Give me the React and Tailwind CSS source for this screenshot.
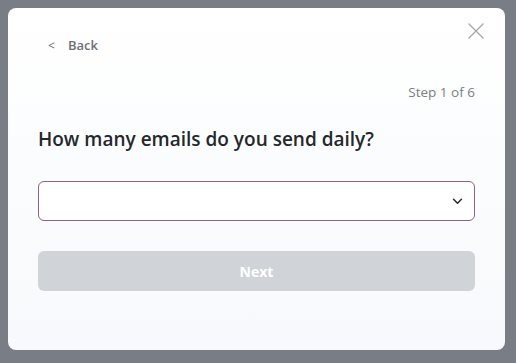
import React from "react";

export default function App() {
  return (
    <div className="w-[516px] h-[363px] bg-[#787d86] p-2" style={{ fontFamily: "'Open Sans', 'Noto Sans', sans-serif" }}>
      <div className="relative w-[497px] h-[342px] rounded-lg bg-gradient-to-b from-white to-[#f7f9fc] pl-[30px] pr-[30px] pt-[29px]">
        <button className="absolute right-[21px] top-[15px] w-[16px] h-[16px] text-[#a3a6aa]">
          <svg viewBox="0 0 16 16" width="16" height="16" fill="none" stroke="currentColor" strokeWidth="1.3" strokeLinecap="round">
            <path d="M1 1 L15 15 M15 1 L1 15" />
          </svg>
        </button>
        <div className="flex items-center h-[18px] pl-[10px] text-[#6d7075] text-[13px] font-semibold">
          <span className="font-normal text-[12px] w-[20px]">&lt;</span>
          <span>Back</span>
        </div>
        <div className="mt-[29px] flex justify-end text-[13.5px] text-[#7b7e83] leading-[16px]">Step 1 of 6</div>
        <h1 className="mt-[27px] text-[19px] leading-[24px] font-semibold text-[#25282b]">How many emails do you send daily?</h1>
        <div className="mt-[30px] h-[40px] rounded-md border border-[#8c5f98] bg-white flex items-center justify-end pr-[11px]">
          <svg viewBox="0 0 12 8" width="11" height="7" fill="none" stroke="#2b2d30" strokeWidth="1.8" strokeLinecap="round" strokeLinejoin="round">
            <path d="M1.5 1.5 L6 6 L10.5 1.5" />
          </svg>
        </div>
        <button className="mt-[30px] w-full h-[40px] rounded-md bg-[#d0d4d8] text-white font-bold text-[14px]">Next</button>
      </div>
    </div>
  );
}
